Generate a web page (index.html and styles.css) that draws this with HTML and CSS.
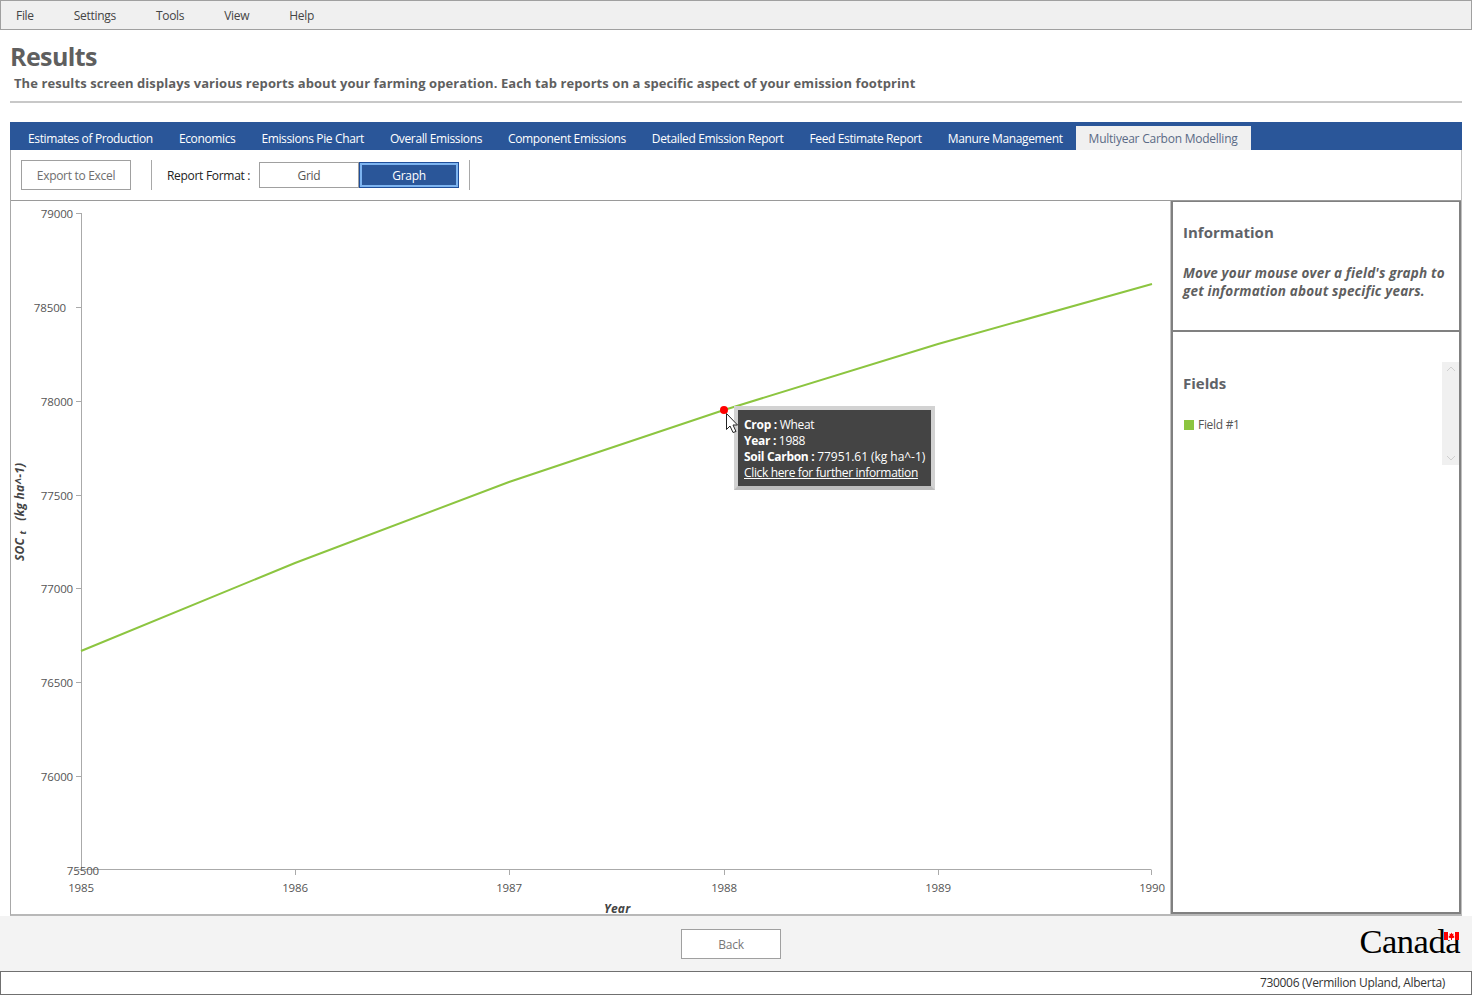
FILE: index.html
```html
<!DOCTYPE html>
<html lang="en">
<head>
<meta charset="utf-8">
<title>Results</title>
<link rel="stylesheet" href="styles.css">
</head>
<body>
<nav class="menu">
  <span class="menu-item">File</span>
  <span class="menu-item">Settings</span>
  <span class="menu-item">Tools</span>
  <span class="menu-item">View</span>
  <span class="menu-item">Help</span>
</nav>
<header class="head">
  <h1 class="title">Results</h1>
  <p class="desc">The results screen displays various reports about your farming operation. Each tab reports on a specific aspect of your emission footprint</p>
  <div class="rule"></div>
</header>
<div class="tabs">
  <span class="tab">Estimates of Production</span>
  <span class="tab">Economics</span>
  <span class="tab">Emissions Pie Chart</span>
  <span class="tab">Overall Emissions</span>
  <span class="tab">Component Emissions</span>
  <span class="tab">Detailed Emission Report</span>
  <span class="tab">Feed Estimate Report</span>
  <span class="tab">Manure Management</span>
  <span class="tab active">Multiyear Carbon Modelling</span>
</div>
<main class="frame">
  <div class="toolbar">
    <button class="btn export">Export to Excel</button>
    <span class="sep"></span>
    <span class="label">Report Format :</span>
    <div class="toggle">
      <span class="opt">Grid</span>
      <span class="opt on">Graph</span>
    </div>
    <span class="sep"></span>
  </div>
  <div class="work">
    <section class="chart">
      <svg class="plot" viewBox="11 201 1159 713" width="1159" height="713">
        <g class="axis">
          <path d="M81.5 213V869.5H1151.5"/>
          <path d="M76 213.5H81M76 307.5H81M76 401.5H81M76 495.5H81M76 588.5H81M76 682.5H81M76 776.5H81M76 869.5H81"/>
          <path d="M295.5 870V875M509.5 870V875M724.5 870V875M938.5 870V875M1151.5 870V875"/>
        </g>
        <g class="tick-y">
          <text x="73" y="218">79000</text>
          <text x="66" y="312">78500</text>
          <text x="73" y="406">78000</text>
          <text x="73" y="500">77500</text>
          <text x="73" y="593">77000</text>
          <text x="73" y="687">76500</text>
          <text x="73" y="781">76000</text>
          <text x="99" y="875">75500</text>
        </g>
        <g class="tick-x">
          <text x="81" y="892">1985</text>
          <text x="295" y="892">1986</text>
          <text x="509" y="892">1987</text>
          <text x="724" y="892">1988</text>
          <text x="938" y="892">1989</text>
          <text x="1152" y="892">1990</text>
        </g>
        <polyline class="series" points="81,651 295,563 509,482 724,410 938,344 1152,284"/>
        <circle class="dot" cx="724" cy="410" r="4"/>
        <text class="axis-title" x="604" y="913">Year</text>
        <text class="axis-title" transform="translate(24 561) rotate(-90)">SOC <tspan class="sub" dy="2">t</tspan><tspan dy="-2">   (kg ha^-1)</tspan></text>
      </svg>
      <div class="tip">
        <div><b>Crop :</b> Wheat</div>
        <div><b>Year :</b> 1988</div>
        <div><b>Soil Carbon :</b> <span class="tip-val">77951.61 (kg ha^-1)</span></div>
        <div class="tip-link">Click here for further information</div>
      </div>
      <svg class="cursor" width="14" height="22" viewBox="0 0 14 22"><path d="M1.5 1.5V17.5L5 14L8 20.5L11 19.5L8 13H12.5Z"/></svg>
    </section>
    <aside class="side">
      <section class="info">
        <h2 class="side-title">Information</h2>
        <p class="info-text">Move your mouse over a field's graph to get information about specific years.</p>
      </section>
      <section class="fields">
        <div class="scroll">
          <svg width="18" height="14" viewBox="0 0 18 14"><path d="M5 9L9 5L13 9" /></svg>
          <svg width="18" height="14" viewBox="0 0 18 14"><path d="M5 5L9 9L13 5" /></svg>
        </div>
        <h2 class="side-title">Fields</h2>
        <div class="legend"><span class="swatch"></span>Field #1</div>
      </section>
    </aside>
  </div>
</main>
<footer class="foot">
  <button class="btn back">Back</button>
  <div class="wordmark">Canada<svg class="flag" width="15" height="8" viewBox="0 0 15 8"><path fill="#f00" d="M0 0H4V8H0ZM11 0H15V8H11Z"/><path fill="#fff" d="M4 0H11V8H4Z"/><path fill="#f00" d="M7.5 0.5L8.3 2L9.6 1.5L9.1 4L10.3 3.6L10.1 4.8L10.8 5L9 6.2L8 6.1V8H7V6.1L6 6.2L4.2 5L4.9 4.8L4.7 3.6L5.9 4L5.4 1.5L6.7 2Z"/></svg></div>
</footer>
<div class="status">730006 (Vermilion Upland, Alberta)</div>
</body>
</html>
```
FILE: styles.css
```css
* { box-sizing: border-box; }
html, body { margin: 0; padding: 0; }
body {
  width: 1472px;
  height: 995px;
  overflow: hidden;
  background: #fff;
  font-family: "Open Sans", "Noto Sans", sans-serif;
  font-size: 12px;
  letter-spacing: -0.3px;
  color: #444;
}
.menu {
  height: 30px;
  background: #f0f0f0;
  border: 1px solid #a0a0a0;
  display: flex;
  align-items: center;
  padding: 0 0 0 15px;
  gap: 40px;
}
.head { padding: 11px 10px 0 10px; height: 92px; }
.title {
  margin: 0;
  font-size: 25px;
  line-height: 30px;
  font-weight: 700;
  letter-spacing: -0.6px;
  color: #5f5f5f;
}
.desc {
  margin: 2px 0 0 4px;
  font-size: 13px;
  line-height: 20px;
  font-weight: 700;
  letter-spacing: 0.08px;
  color: #5f5f5f;
}
.rule { margin-top: 8px; height: 2px; background: #c8c8c8; }
.tabs {
  margin: 0 10px;
  height: 28px;
  padding: 4px 0 0 5px;
  background: #2a5699;
  display: flex;
  color: #fff;
}
.tab {
  padding: 4px 13px 0;
  height: 24px;
  line-height: 18px;
  letter-spacing: -0.37px;
}
.tab.active { background: #f0f0f0; color: #5a6a85; letter-spacing: -0.24px; }
.frame {
  margin: 0 10px;
  height: 766px;
  border-left: 1px solid #a8a8a8;
  border-right: 1px solid #c0c0c0;
  border-bottom: 2px solid #b8b8b8;
  display: flex;
  flex-direction: column;
}
.toolbar {
  height: 51px;
  flex: none;
  display: flex;
  align-items: center;
  padding: 0 0 0 10px;
  border-bottom: 1px solid #9a9a9a;
}
.btn {
  font: inherit;
  letter-spacing: inherit;
  background: #fff;
  color: #6e6e6e;
  border: 1px solid #a0a0a0;
  padding: 0;
}
.export { width: 110px; height: 30px; padding-top: 1px; }
.sep { width: 1px; height: 30px; background: #a8a8a8; }
.export + .sep { margin-left: 20px; }
.label { margin-left: 15px; padding-top: 1px; color: #222; width: 92px; }
.toggle { display: flex; height: 26px; margin-right: 10px; }
.opt {
  width: 100px;
  display: flex;
  align-items: center;
  justify-content: center;
  padding-top: 1px;
  border: 1px solid #a0a0a0;
  color: #555;
}
.opt.on {
  background: #2a5699;
  color: #fff;
  border: 1px solid #1f4e9a;
  box-shadow: inset 0 0 0 2px #7db4f0;
}
.work { flex: 1; display: flex; min-height: 0; }
.chart { position: relative; width: 1160px; border-right: 1px solid #c0c0c0; }
.plot { display: block; overflow: visible; }
.axis path { fill: none; stroke: #aaa; stroke-width: 1; }
.tick-y text, .tick-x text { font-size: 11.5px; letter-spacing: -0.15px; fill: #555; }
.tick-y text { text-anchor: end; }
.tick-x text { text-anchor: middle; }
.series { fill: none; stroke: #8cc540; stroke-width: 2; }
.dot { fill: #f00; }
.cursor { position: absolute; left: 714px; top: 211px; }
.cursor path { fill: #fff; stroke: #222; stroke-width: 1; }
.axis-title { font-size: 12px; font-weight: 700; font-style: italic; letter-spacing: 0.2px; fill: #444; white-space: pre; }
.sub { font-size: 9px; }
.tip {
  position: absolute;
  left: 723px;
  top: 205px;
  width: 201px;
  height: 84px;
  padding: 7px 5px 0 6px;
  background: #444;
  border: 4px solid #d2d2d2;
  border-bottom-color: #bcbcbc;
  color: #fff;
  line-height: 16px;
  white-space: nowrap;
}
.tip-val { letter-spacing: -0.05px; }
.tip-link { text-decoration: underline; letter-spacing: -0.35px; }
.side { flex: 1; display: flex; flex-direction: column; }
.info {
  height: 131px;
  padding: 20px 10px 0 10px;
  border: 1px solid #808080;
  border-width: 1px 2px 2px 2px;
}
.side-title {
  margin: 0;
  font-size: 15px;
  line-height: 20px;
  font-weight: 700;
  letter-spacing: 0;
  color: #5f6368;
}
.info-text {
  margin: 22px 0 0;
  font-size: 13.5px;
  line-height: 18px;
  font-weight: 700;
  font-style: italic;
  letter-spacing: 0.18px;
  color: #5f5f5f;
}
.fields {
  position: relative;
  flex: 1;
  padding: 41px 10px 0 10px;
  border: 1px solid #808080;
  border-width: 0 2px 2px 2px;
}
.scroll {
  position: absolute;
  right: 0;
  top: 30px;
  width: 17px;
  height: 103px;
  background: #f0f0f0;
  display: flex;
  flex-direction: column;
  justify-content: space-between;
  align-items: center;
}
.scroll path { fill: none; stroke: #cfcfcf; stroke-width: 1; }
.legend {
  display: flex;
  align-items: center;
  margin: 24px 0 0 1px;
  line-height: 16px;
  color: #555;
}
.swatch { width: 10px; height: 10px; margin-right: 4px; background: #8cc540; }
.foot {
  height: 55px;
  background: #f3f3f3;
  position: relative;
  display: flex;
  justify-content: center;
  padding: 13px 10px 0 0;
}
.back { width: 100px; height: 30px; color: #777; }
.wordmark {
  position: absolute;
  right: 12px;
  top: 5px;
  font-family: "Liberation Serif", serif;
  font-size: 34.5px;
  line-height: 40px;
  letter-spacing: -0.5px;
  color: #000;
}
.flag { position: absolute; right: 1px; top: 11px; }
.status {
  height: 24px;
  border: 1px solid #707070;
  background: #fff;
  text-align: right;
  padding-right: 26px;
  line-height: 22px;
  color: #333;
}
```
